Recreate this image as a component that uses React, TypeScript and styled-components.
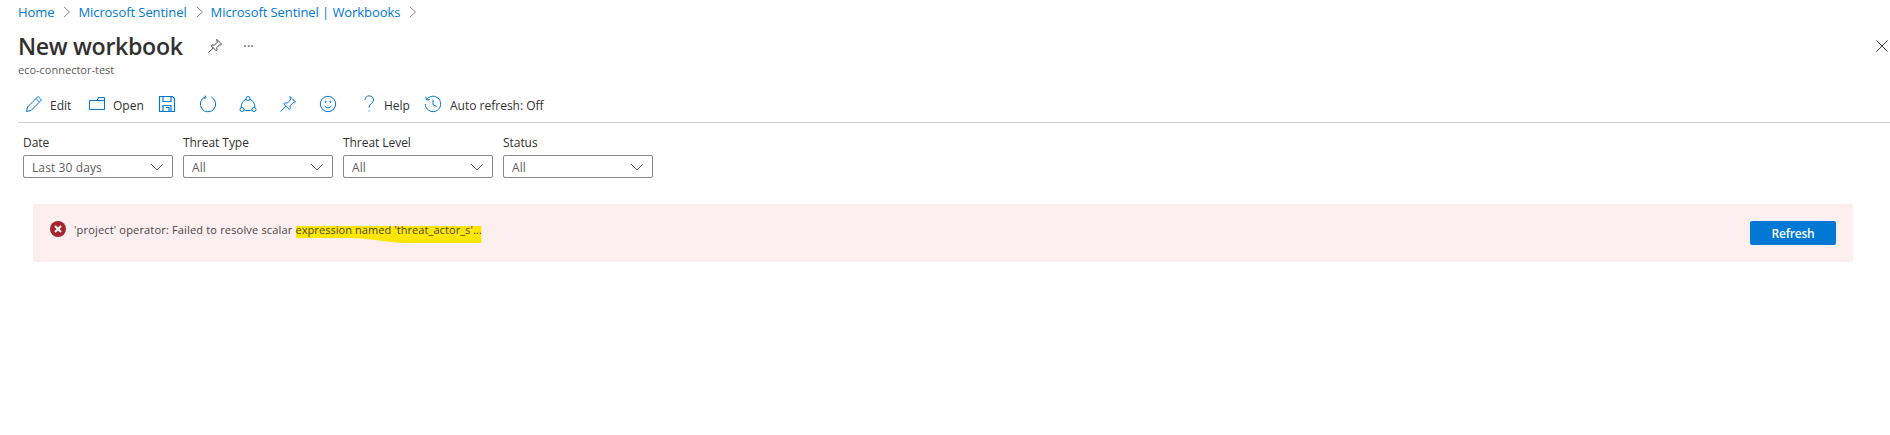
import React from 'react';
import styled, { createGlobalStyle } from 'styled-components';

const GlobalStyle = createGlobalStyle`
    html, body {
        margin: 0;
        padding: 0;
        background: #fff;
        font-family: "Open Sans", "Noto Sans", "Liberation Sans", sans-serif;
        color: #323130;
    }
`;

const Page = styled.div`
    width: 1890px;
    height: 435px;
    overflow: hidden;
    display: flex;
    flex-direction: column;
    padding-left: 18px;
    box-sizing: border-box;
`;

const Breadcrumb = styled.nav`
    height: 24px;
    display: flex;
    align-items: center;
    font-size: 13px;
    letter-spacing: -0.08px;
    color: #0078d4;
`;

const Crumb = styled.span`
    color: #0078d4;
`;

const CrumbSep = styled.svg`
    width: 8px;
    height: 12px;
    margin: 0 7px 0 9px;
    fill: none;
    stroke: #8a8886;
`;

const TitleRow = styled.div`
    height: 32px;
    margin-top: 6px;
    display: flex;
    align-items: center;
    padding-right: 2px;
`;

const Title = styled.h1`
    margin: 0;
    font-size: 23.2px;
    font-weight: 600;
    letter-spacing: -0.35px;
    color: #323130;
    width: 189px;
    flex: none;
`;

const TitleIcon = styled.svg`
    width: 16px;
    height: 16px;
    fill: none;
    stroke: #323130;
`;

const Ellipsis = styled.span`
    margin-left: 20px;
    font-size: 14px;
    line-height: 1;
    color: #605e5c;
`;

const CloseButton = styled.svg`
    margin-left: auto;
    width: 12px;
    height: 12px;
    stroke: #404040;
    stroke-width: 1;
`;

const Subtitle = styled.div`
    font-size: 11px;
    letter-spacing: 0;
    line-height: 16px;
    color: #605e5c;
`;

const Toolbar = styled.div`
    height: 33px;
    margin-top: 11px;
    display: flex;
    align-items: center;
    padding-left: 7px;
`;

const ToolButton = styled.div<{ $w: number }>`
    width: ${p => p.$w}px;
    flex: none;
    display: flex;
    align-items: center;
    font-size: 12px;
    letter-spacing: 0;
    color: #323130;
`;

const ToolIcon = styled.svg<{ $gap?: number }>`
    width: 18px;
    height: 18px;
    flex: none;
    fill: none;
    stroke: #0078d4;
    stroke-width: 1;
    margin-right: ${p => p.$gap ?? 0}px;
    margin-bottom: 3px;
`;

const Divider = styled.div`
    height: 1px;
    background: #d2d0ce;
`;

const Filters = styled.div`
    display: flex;
    gap: 10px;
    padding-left: 5px;
    margin-top: 9px;
`;

const Filter = styled.div`
    width: 150px;
`;

const FilterLabel = styled.div`
    font-size: 12px;
    line-height: 21px;
    margin-bottom: 2px;
    letter-spacing: -0.05px;
    color: #323130;
`;

const Select = styled.div`
    height: 23px;
    box-sizing: border-box;
    border: 1px solid #8a8886;
    border-radius: 2px;
    display: flex;
    align-items: center;
    justify-content: space-between;
    padding: 1px 8px 0;
    font-size: 12px;
    letter-spacing: 0.1px;
    color: #605e5c;
`;

const Chevron = styled.svg`
    width: 14px;
    height: 8px;
    fill: none;
    stroke: #605e5c;
`;

const ErrorBox = styled.div`
    height: 58px;
    width: 1820px;
    margin: 26px 0 0 15px;
    background: #fdefef;
    border-radius: 2px;
    display: flex;
    align-items: center;
    justify-content: space-between;
    padding: 0 17px;
    box-sizing: border-box;
`;

const ErrorMessage = styled.div`
    display: flex;
    align-items: center;
    margin-bottom: 8px;
`;

const ErrorIcon = styled.svg`
    width: 16px;
    height: 16px;
    flex: none;
    margin-right: 8px;
`;

const ErrorText = styled.div`
    font-size: 11px;
    letter-spacing: 0.17px;
    color: #484644;
`;

const Marked = styled.span`
    position: relative;
    z-index: 0;
    letter-spacing: 0.07px;
`;

const Marker = styled.svg`
    position: absolute;
    z-index: -1;
    left: 1px;
    right: 0;
    top: 4px;
    width: calc(100% - 1px);
    height: 17px;
    fill: #ffe600;
`;

const RefreshButton = styled.button`
    width: 86px;
    height: 24px;
    border: none;
    border-radius: 2px;
    background: #0078d4;
    color: #fff;
    font-family: inherit;
    font-size: 12px;
    font-weight: 600;
    letter-spacing: -0.2px;
    padding: 0;
`;

const Sep = () => (
    <CrumbSep viewBox="0 0 8 12"><path d="M1 1l5.500 5L1 11" /></CrumbSep>
);

const Arrow = () => (
    <Chevron viewBox="0 0 14 8"><path d="M1 1l6 6 6-6" /></Chevron>
);

const PinPath = 'M11 1.500l5.500 5.500-1 .8-1.200-.3-3.300 3.300.3 2.600-1 1L4.700 8.800l1-1 2.600.3 3.300-3.300-.3-1.200zM7 11.200l-5.500 5.300';

const filters = [
    { label: 'Date', value: 'Last 30 days' },
    { label: 'Threat Type', value: 'All' },
    { label: 'Threat Level', value: 'All' },
    { label: 'Status', value: 'All' },
];

export default function App() {
    return (
        <Page>
            <GlobalStyle />
            <Breadcrumb>
                <Crumb>Home</Crumb>
                <Sep />
                <Crumb>Microsoft Sentinel</Crumb>
                <Sep />
                <Crumb>Microsoft Sentinel | Workbooks</Crumb>
                <Sep />
            </Breadcrumb>
            <TitleRow>
                <Title>New workbook</Title>
                <TitleIcon viewBox="0 0 18 18"><path d={PinPath} /></TitleIcon>
                <Ellipsis>···</Ellipsis>
                <CloseButton viewBox="0 0 12 12"><path d="M0.500 0.500l11 11M11.500 0.500l-11 11" /></CloseButton>
            </TitleRow>
            <Subtitle>eco-connector-test</Subtitle>
            <Toolbar>
                <ToolButton $w={63}>
                    <ToolIcon $gap={7} viewBox="0 0 18 18">
                        <path d="M13 1.500l3.500 3.500L6 15.500l-4.500 1 1-4.500zM11 3.500l3.500 3.500" />
                    </ToolIcon>
                    Edit
                </ToolButton>
                <ToolButton $w={70}>
                    <ToolIcon $gap={7} viewBox="0 0 18 18">
                        <path d="M1.500 5.500h7.500l1.500-3h6v12h-15zM9 5.500h7.500" />
                    </ToolIcon>
                    Open
                </ToolButton>
                <ToolButton $w={41}>
                    <ToolIcon viewBox="0 0 18 18">
                        <path d="M1.500 1.500h13l2 2v13h-15zM5 1.500v5h8v-5M5 16.500v-6h8v6M8 12.500h3v4" strokeWidth="1.200" />
                    </ToolIcon>
                </ToolButton>
                <ToolButton $w={40}>
                    <ToolIcon viewBox="0 0 18 18">
                        <path d="M12.500 2.200A7.700 7.700 0 1 1 6 2M6 0.500l1 2-2 1.200" />
                    </ToolIcon>
                </ToolButton>
                <ToolButton $w={40}>
                    <ToolIcon viewBox="0 0 18 18">
                        <circle cx="9" cy="3.500" r="2" />
                        <circle cx="3" cy="14.500" r="2" />
                        <circle cx="15" cy="14.500" r="2" />
                        <path d="M7.200 4.200C4 5.500 2 8.500 2.200 12.600M10.800 4.200c3.200 1.300 5.200 4.300 5 8.400M5 14.800c2.500 1 5.500 1 8 0" />
                    </ToolIcon>
                </ToolButton>
                <ToolButton $w={40}>
                    <ToolIcon viewBox="0 0 18 18"><path d={PinPath} /></ToolIcon>
                </ToolButton>
                <ToolButton $w={41}>
                    <ToolIcon viewBox="0 0 18 18">
                        <circle cx="9" cy="9" r="7.700" />
                        <path d="M5.300 10.500c1.800 3 5.600 3 7.400 0" />
                        <circle cx="6.500" cy="6.800" r=".6" />
                        <circle cx="11.500" cy="6.800" r=".6" />
                    </ToolIcon>
                </ToolButton>
                <ToolButton $w={64}>
                    <ToolIcon $gap={6} viewBox="0 0 18 18">
                        <path d="M5 5c0-5.500 8.500-5.500 8.500 0 0 3.500-4.500 3.500-4.500 7.500M9 15.500v1" />
                    </ToolIcon>
                    Help
                </ToolButton>
                <ToolButton $w={120}>
                    <ToolIcon $gap={8} viewBox="0 0 18 18">
                        <path d="M2.500 4.800A7.700 7.700 0 1 1 1.300 9M1.800 1.500l.7 3.500 3.500-.4M9 4.500V9.500l3.500 2" />
                    </ToolIcon>
                    Auto refresh: Off
                </ToolButton>
            </Toolbar>
            <Divider />
            <Filters>
                {filters.map(f => (
                    <Filter key={f.label}>
                        <FilterLabel>{f.label}</FilterLabel>
                        <Select>
                            {f.value}
                            <Arrow />
                        </Select>
                    </Filter>
                ))}
            </Filters>
            <ErrorBox>
                <ErrorMessage>
                    <ErrorIcon viewBox="0 0 16 16">
                        <circle cx="8" cy="8" r="8" fill="#a4262c" />
                        <path d="M5 5l6 6M11 5l-6 6" stroke="#fff" strokeWidth="2" />
                    </ErrorIcon>
                    <ErrorText>
                        'project' operator: Failed to resolve scalar{' '}
                        <Marked>
                            <Marker viewBox="0 0 184 17" preserveAspectRatio="none">
                                <path d="M0 0H184V17H111C90 17 76 12 50 12H0z" />
                            </Marker>
                            expression named 'threat_actor_s'...
                        </Marked>
                    </ErrorText>
                </ErrorMessage>
                <RefreshButton>Refresh</RefreshButton>
            </ErrorBox>
        </Page>
    );
}
